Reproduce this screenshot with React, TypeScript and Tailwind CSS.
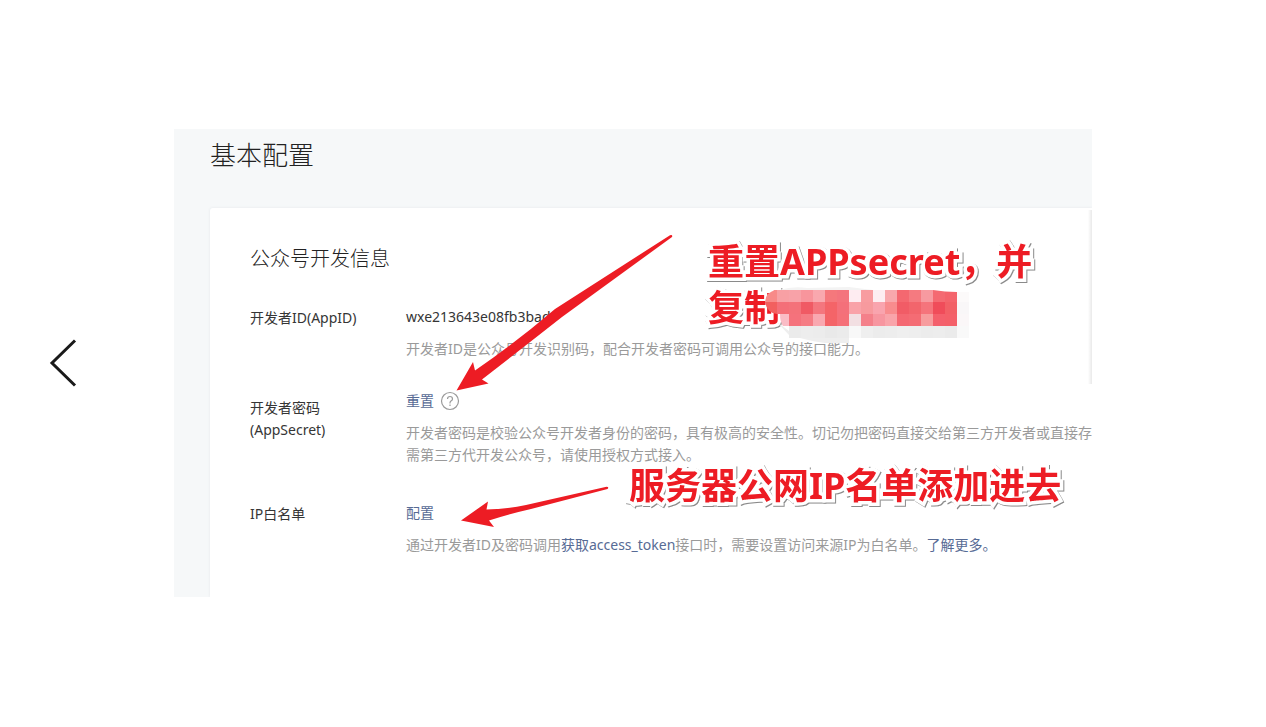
import { ReactNode } from 'react';

interface IRow {
  label: ReactNode;
  children: ReactNode;
  raised?: boolean;
}

const noteStyle =
  'absolute whitespace-nowrap text-[36px] leading-[46px] font-bold text-[#ed1c24] [-webkit-text-stroke:7px_white] [paint-order:stroke_fill] [stroke-linejoin:round] [filter:drop-shadow(1px_1px_0px_#8a8a8a)]';

// one array per line of 12px blocks, starting at x = 24
const mosaic = [
  ['#f8a2a8', '#f8959c', '#f9a8ae', '#f5787c', '#f4747d', '#feecf1', '#f89ca0', '#fdeef2', '#f8a8ac', '#f46870', '#f57a80', '#f79aa0', '#f46a72', '#f4646c', '#fcfafa'],
  ['#f4727a', '#f05a64', '#f4767e', '#f46468', '#f4707a', '#f9a2a8', '#f79a9e', '#f9a4ae', '#f88c8e', '#f15c66', '#f2656c', '#f5747c', '#f04c5a', '#f26066', '#f9f7f8'],
  ['#f5727c', '#f57c84', '#f9a8b0', '#f46468', '#f57078', '#f2dfe2', '#f4808a', '#f796a0', '#f9a4aa', '#f46872', '#f46c74', '#f79c9e', '#f4606c', '#f46069', '#fbf7f8'],
  ['#ebebeb', '#ededed', '#ececec', '#e9e9e9', '#ebebeb', '#f8f8f8', '#efefef', '#ececec', '#ededed', '#efefef', '#eeeeee', '#ececec', '#ededed', '#ebebeb', '#f9f9f9'],
];

const Row = ({ label, children, raised }: IRow) => (
  <div className="flex">
    <div className="w-[156px] shrink-0 pt-px text-[#353535]">{label}</div>
    <div className={raised ? '-mt-1.5' : ''}>{children}</div>
  </div>
);

const Hint = ({ children }: { children: ReactNode }) => (
  <p className="mt-2.5 whitespace-nowrap text-[#9a9a9a]">{children}</p>
);

const Arrows = () => (
  <svg
    className="absolute top-0 left-0 pointer-events-none"
    width="918"
    height="468"
    viewBox="0 0 918 468"
    fill="#ed1c24"
    aria-hidden="true"
  >
    <path d="M282.5 261.5L299 233L301 241.5Q340 215 381 180L496 106.2Q499 105.500 498 108L388 188Q346 221 308 250.500L314.500 254.500Z" />
    <path d="M287 391.500L314 372.500L312.500 380.500Q332 380 352 376L432.500 357.700Q435.500 358 433.500 360L357 380Q335 385 315 391.500L320 398Z" />
  </svg>
);

const Mosaic = () => (
  <svg
    className="absolute top-[157px] left-[591px]"
    width="206"
    height="58"
    viewBox="0 0 206 58"
    aria-hidden="true"
  >
    <path d="M12 36L24 49Q40 54 60 57L84 57V45H24Z" fill="#eeeeee" />
    <path d="M14 4Q28 0 42 2L84 1L108 4Z" fill="#f3f3f3" />
    <path d="M12 4V16H0Q1 5 12 4Z" fill="#f88a88" />
    <path d="M0 16H12V28Q2 27 0 16Z" fill="#f2605f" />
    <path d="M12 4H24V16H12Z" fill="#f8a0a4" />
    <path d="M12 16H24V28H12Z" fill="#f46f78" />
    <path d="M15 28H24V40H18Q15 36 15 28Z" fill="#fabcc6" />
    {mosaic.map((line, y) =>
      line.map((color, x) => (
        <rect key={`${y}-${x}`} x={24 + x * 12} y={4 + y * 12} width="12" height="12" fill={color} />
      )),
    )}
    <path d="M168 4H204V6H192Q180 6 168 4Z" fill="white" />
  </svg>
);

const App = () => {
  return (
    <main className="flex min-h-screen items-center bg-white pr-[174px] pb-px font-['Noto_Sans','Noto_Sans_CJK_SC',sans-serif] text-[14px] leading-[22px]">
      <button type="button" aria-label="Previous" className="flex w-[126px] shrink-0 justify-center">
        <svg width="28" height="50" viewBox="0 0 28 50" fill="none" stroke="#1a1a1a" strokeWidth="3">
          <path d="M26 2.500L3 25L26 47.500" />
        </svg>
      </button>
      <section className="relative ml-12 min-w-0 flex-1 overflow-hidden bg-[#f6f8f9] pl-9">
        <h1 className="pt-2 text-[26px] leading-9 font-light text-[#222222]">基本配置</h1>
        <div className="mt-[35px] rounded-tl-[3px] bg-white pt-[37px] pb-[41px] pl-10 shadow-[0_0_3px_#e4e8eb]">
          <h2 className="text-[20px] leading-7 font-light text-[#222222]">公众号开发信息</h2>
          <div className="mt-[33px] flex flex-col gap-9">
            <Row label="开发者ID(AppID)">
              <p className="text-[#353535]">wxe213643e08fb3bad</p>
              <Hint>开发者ID是公众号开发识别码，配合开发者密码可调用公众号的接口能力。</Hint>
            </Row>
            <Row
              raised
              label={
                <>
                  开发者密码
                  <br />
                  (AppSecret)
                </>
              }
            >
              <div className="flex items-center gap-1.5">
                <button type="button" className="text-[#576b95]">
                  重置
                </button>
                <svg width="20" height="20" viewBox="0 0 20 20" fill="none" stroke="#9a9a9a" strokeWidth="1.2">
                  <circle cx="10" cy="10" r="8.500" />
                  <path d="M7.500 8Q7.500 5.500 10 5.500T12.500 8Q12.500 9.200 11 10.100Q10 10.800 10 12V12.500M10 13.500V15" />
                </svg>
              </div>
              <Hint>
                开发者密码是校验公众号开发者身份的密码，具有极高的安全性。切记勿把密码直接交给第三方开发者或直接存
                <br />
                需第三方代开发公众号，请使用授权方式接入。
              </Hint>
            </Row>
            <Row label="IP白名单">
              <button type="button" className="block text-[#576b95]">
                配置
              </button>
              <Hint>
                通过开发者ID及密码调用
                <a href="#token" className="text-[#576b95]">
                  获取access_token
                </a>
                接口时，需要设置访问来源IP为白名单。
                <a href="#more" className="text-[#576b95]">
                  了解更多。
                </a>
              </Hint>
            </Row>
          </div>
        </div>
        <div className="absolute top-[81px] right-0 h-[174px] w-1 bg-linear-to-r from-white to-[#e9e9e9]" />
        <Arrows />
        <p className={`${noteStyle} top-[110px] left-[534px]`}>
          重置APPsecret，并
          <br />
          复制
        </p>
        <Mosaic />
        <p className={`${noteStyle} top-[334px] left-[455px]`}>服务器公网IP名单添加进去</p>
      </section>
    </main>
  );
};

export default App;
